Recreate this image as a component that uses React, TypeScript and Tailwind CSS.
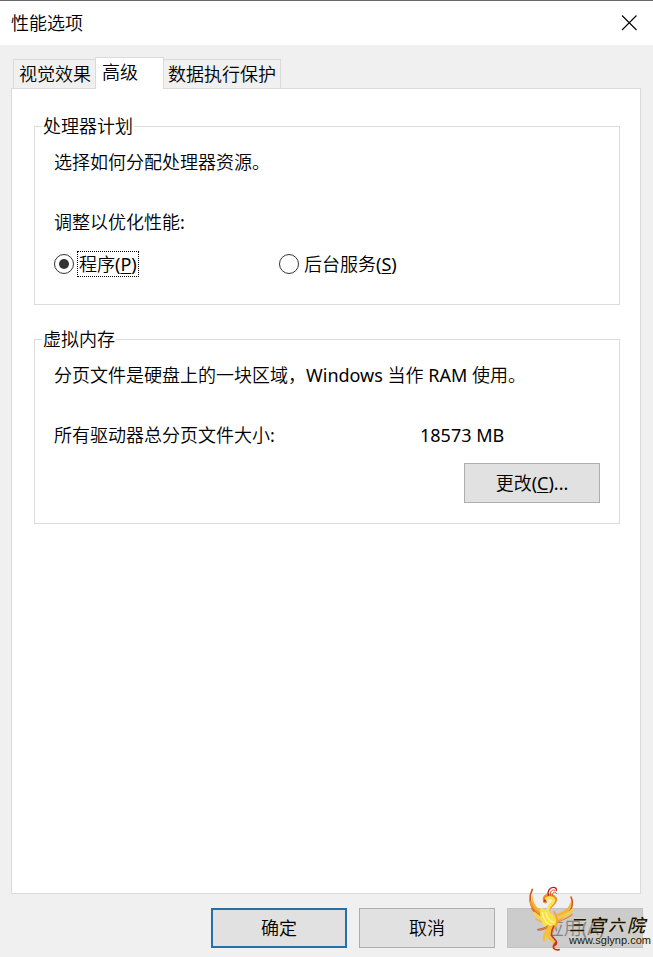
import React, { useState } from 'react';
import { clsx } from 'clsx';

const tabs = [
  { id: 'visual', label: '视觉效果' },
  { id: 'advanced', label: '高级' },
  { id: 'dep', label: '数据执行保护' }
];

const schedules = [
  { value: 'programs', label: '程序', hotkey: 'P' },
  { value: 'services', label: '后台服务', hotkey: 'S' }
];

function TitleBar() {
  return (
    <header className="flex h-[45px] items-center justify-between border-t border-[#6b696b] bg-white pl-[11px] pr-4">
      <h1>性能选项</h1>
      <button type="button" aria-label="关闭" className="flex h-4 w-4 items-center justify-center">
        <svg viewBox="0 0 16 16" className="h-4 w-4" fill="none" stroke="#000" strokeWidth="1.1">
          <path d="M1 0.5 15.5 15M15.5 0.5 1 15" />
        </svg>
      </button>
    </header>
  );
}

function Group({ title, className, children }: { title: string; className?: string; children: React.ReactNode }) {
  return (
    <fieldset className={clsx('border border-[#dcdcdc] px-[19px] pt-3', className)}>
      <legend className="-ml-3 px-px">{title}</legend>
      {children}
    </fieldset>
  );
}

function Logo() {
  return (
    <div className="pointer-events-none absolute -right-[6px] bottom-[-5px] flex items-end">
      <svg viewBox="80 45 145 205" className="-mr-[7px] h-[68px] w-12" fill="none" strokeLinecap="round" strokeLinejoin="round">
        {/* Wings */}
        <path d="M93 58C82 80 85 104 98 119c10 13 24 17 34 24" stroke="#d2571f" strokeWidth="5" />
        <path d="M94 72C91 100 110 119 133 130L120 134C98 126 84 103 94 72Z" fill="#f6b437" />
        <path d="M88 97C96 123 117 130 137 145" stroke="#ee9a2a" strokeWidth="6" />
        <path d="M91 115C102 137 122 138 140 153" stroke="#e0702a" strokeWidth="4" />
        <path d="M99 130C113 145 127 145 142 157" stroke="#f7d545" strokeWidth="9" />
        <path d="M104 148C116 156 130 158 142 166" stroke="#f2b43a" strokeWidth="4" />
        <path d="M210 81C219 102 211 126 191 138C182 144 174 149 166 154" stroke="#d2571f" strokeWidth="5" />
        <path d="M208 94C206 114 191 124 166 133L174 140C201 133 215 115 208 94Z" fill="#f6b437" />
        <path d="M213 121C200 136 181 139 164 151" stroke="#f3cc45" strokeWidth="9" />
        <path d="M213 134C198 149 181 148 165 161" stroke="#e58a2c" strokeWidth="4" />
        {/* Neck and head */}
        <path d="M133 96C125 87 130 77 142 76C154 75 164 82 163 91C162 104 145 107 142 119C139 132 153 138 159 151" stroke="#ee8a28" strokeWidth="9" />
        <path d="M136 86C149 80 160 86 157 94C152 104 140 109 140 121C141 134 154 141 159 154" stroke="#ffe34a" strokeWidth="9" />
        <path d="M142 76C137 65 145 53 155 52C163 51 168 57 165 62" stroke="#b9221b" strokeWidth="4" />
        <path d="M148 76C145 64 154 57 161 61M154 75C153 67 160 63 166 70" stroke="#e04c1d" strokeWidth="3" />
        <path d="M130 87L125 98L136 93" fill="#c4301c" />
        {/* Body */}
        <path d="M117 114C135 117 155 131 163 147C172 163 162 178 146 180C126 174 114 152 117 114Z" fill="#fbe045" />
        <path d="M159 126C166 137 174 151 165 166C160 175 153 181 148 190" stroke="#f6a62f" strokeWidth="6" />
        <path d="M123 128C127 151 137 163 153 167M134 128C138 145 148 155 158 158" stroke="#fff59b" strokeWidth="4" />
        {/* Tail feathers */}
        <path d="M141 167C130 177 114 176 108 180C117 184 132 178 141 173" fill="#efa52d" stroke="#bf3020" strokeWidth="2" />
        <path d="M140 172L132 200L150 216L146 196L162 172Z" fill="#f6c23c" />
        <path d="M145 170C130 190 124 202 129 212M154 168C142 190 139 199 151 210C160 218 164 225 157 234" stroke="#f3bf36" strokeWidth="7" />
        <path d="M158 169C148 188 148 201 160 208C169 216 168 226 159 228M164 219C151 232 156 243 174 240" stroke="#c9361f" strokeWidth="5" />
      </svg>
      <div className="mb-[7px] w-20 text-[#1c1408] [text-shadow:0_0_2px_#e8dcae]">
        <div className="flex items-center justify-between pr-1 font-['Noto_Sans_CJK_SC',sans-serif] text-lg leading-5 font-medium italic">
          <span className="text-base leading-5">三</span>
          <span>宫</span>
          <span className="text-base leading-5">六</span>
          <span>院</span>
        </div>
        <div className="font-['Liberation_Sans',sans-serif] text-[11px] leading-3 whitespace-nowrap">www.sglynp.com</div>
      </div>
    </div>
  );
}

export default function App() {
  const [activeTab, setActiveTab] = useState('advanced');
  const [schedule, setSchedule] = useState('programs');

  return (
    <div className="flex min-h-screen flex-col bg-[#f0f0f0] font-['Noto_Sans','Noto_Sans_CJK_SC_DemiLight','Noto_Sans_CJK_SC',sans-serif] text-lg leading-6 text-black">
      <TitleBar />

      <main className="flex flex-1 flex-col px-3 pt-3 pb-[9px]">
        {/* Tabs */}
        <div role="tablist" className="flex items-end pl-px">
          {tabs.map((tab) => (
            <button
              key={tab.id}
              type="button"
              role="tab"
              aria-selected={tab.id === activeTab}
              onClick={() => setActiveTab(tab.id)}
              className={clsx(
                'border-[#dadada] text-left whitespace-nowrap',
                tab.id === activeTab
                  ? 'relative z-10 -mb-px h-8 min-w-[69px] border-x border-t bg-white px-[6px] pb-1'
                  : 'h-[29px] border-t bg-[#f0f0f0] px-1 first:border-l first:pl-[5px] last:border-r'
              )}
            >
              {tab.label}
            </button>
          ))}
        </div>

        <section role="tabpanel" className="-ml-px flex-1 border border-[#dadada] bg-white pt-[25px] pr-5 pl-[22px]">
          <Group title="处理器计划" className="pb-7">
            <p>选择如何分配处理器资源。</p>
            <p className="mt-9">调整以优化性能:</p>
            <div className="mt-[18px] flex">
              {schedules.map((item) => (
                <label key={item.value} className="flex w-[225px] items-center">
                  <input
                    type="radio"
                    name="schedule"
                    value={item.value}
                    checked={schedule === item.value}
                    onChange={() => setSchedule(item.value)}
                    className="mr-1 flex h-5 w-5 appearance-none items-center justify-center rounded-full border border-[#333] bg-white checked:before:h-[10px] checked:before:w-[10px] checked:before:rounded-full checked:before:bg-[#333] checked:before:content-['']"
                  />
                  <span className={clsx('px-px', schedule === item.value && 'outline-1 outline-dotted outline-black')}>
                    {item.label}(<u className="underline-offset-2">{item.hotkey}</u>)
                  </span>
                </label>
              ))}
            </div>
          </Group>

          <Group title="虚拟内存" className="mt-[22px] pb-5">
            <p>分页文件是硬盘上的一块区域，Windows 当作 RAM 使用。</p>
            <div className="mt-9 flex">
              <span className="w-[366px]">所有驱动器总分页文件大小:</span>
              <span>18573 MB</span>
            </div>
            <div className="mt-4 flex justify-end">
              <button type="button" className="h-10 w-[136px] border border-[#adadad] bg-[#e1e1e1]">
                更改(<u className="underline-offset-2">C</u>)...
              </button>
            </div>
          </Group>
        </section>

        {/* Dialog buttons */}
        <footer className="relative mt-[14px] -mr-[2px] flex justify-end gap-3">
          <button type="button" className="h-10 w-[136px] border-2 border-[#2670a9] bg-[#e1e1e1]">确定</button>
          <button type="button" className="h-10 w-[136px] border border-[#adadad] bg-[#e1e1e1]">取消</button>
          <button type="button" disabled className="h-10 w-[136px] border border-[#c2c2c2] bg-[#cccccc] text-[#838383]">应用(A)</button>
          <Logo />
        </footer>
      </main>
    </div>
  );
}
